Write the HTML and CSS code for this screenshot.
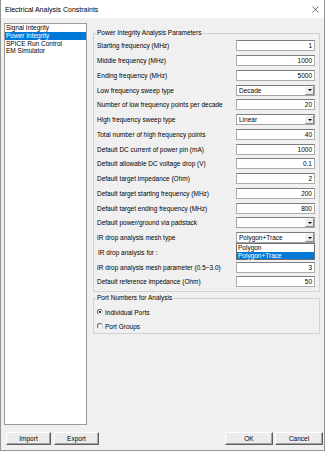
FILE: index.html
```html
<!DOCTYPE html>
<html>
<head>
<meta charset="utf-8">
<title>Electrical Analysis Constraints</title>
<link rel="stylesheet" href="styles.css">
</head>
<body>
<div class="window">
  <div class="titlebar">
    <span class="title">Electrical Analysis Constraints</span>
    <svg class="close" width="7" height="7" viewBox="0 0 7 7"><path d="M0.5 0.5L6.5 6.5M6.5 0.5L0.5 6.5" stroke="#333" stroke-width="0.7" fill="none"/></svg>
  </div>
  <div class="main">
    <ul class="list">
      <li>Signal Integrity</li>
      <li class="sel">Power Integrity</li>
      <li>SPICE Run Control</li>
      <li>EM Simulator</li>
    </ul>
    <div class="panel">
      <fieldset class="group params">
        <legend>Power Integrity Analysis Parameters</legend>
        <div class="row"><span class="lbl">Starting frequency (MHz)</span><span class="field">1</span></div>
        <div class="row"><span class="lbl">Middle frequency (MHz)</span><span class="field">1000</span></div>
        <div class="row"><span class="lbl">Ending frequency (MHz)</span><span class="field">5000</span></div>
        <div class="row"><span class="lbl">Low frequency sweep type</span><span class="combo"><span class="val">Decade</span><span class="arrow"></span></span></div>
        <div class="row"><span class="lbl">Number of low frequency points per decade</span><span class="field">20</span></div>
        <div class="row"><span class="lbl">High frequency sweep type</span><span class="combo"><span class="val">Linear</span><span class="arrow"></span></span></div>
        <div class="row"><span class="lbl">Total number of high frequency points</span><span class="field">40</span></div>
        <div class="row"><span class="lbl">Default DC current of power pin (mA)</span><span class="field">1000</span></div>
        <div class="row"><span class="lbl">Default allowable DC voltage drop (V)</span><span class="field">0.1</span></div>
        <div class="row"><span class="lbl">Default target impedance (Ohm)</span><span class="field">2</span></div>
        <div class="row"><span class="lbl">Default target starting frequency (MHz)</span><span class="field">200</span></div>
        <div class="row"><span class="lbl">Default target ending frequency (MHz)</span><span class="field">800</span></div>
        <div class="row"><span class="lbl">Default power/ground via padstack</span><span class="combo"><span class="val"></span><span class="arrow"></span></span></div>
        <div class="row"><span class="lbl">IR drop analysis mesh type</span>
          <span class="combo open"><span class="val">Polygon+Trace</span><span class="arrow"></span>
            <span class="droplist">
              <span class="opt">Polygon</span>
              <span class="opt sel">Polygon+Trace</span>
            </span>
          </span>
        </div>
        <div class="row"><span class="lbl indent">IR drop analysis for :</span></div>
        <div class="row"><span class="lbl">IR drop analysis mesh parameter (0.5~3.0)</span><span class="field">3</span></div>
        <div class="row"><span class="lbl">Default reference impedance (Ohm)</span><span class="field">50</span></div>
      </fieldset>
      <fieldset class="group ports">
        <legend>Port Numbers for Analysis</legend>
        <div class="radio-row"><span class="radio checked"></span><span>Individual Ports</span></div>
        <div class="radio-row"><span class="radio"></span><span>Port Groups</span></div>
      </fieldset>
    </div>
  </div>
  <div class="buttons">
    <div class="btn-group">
      <span class="btn">Import</span>
      <span class="btn">Export</span>
    </div>
    <div class="btn-group right">
      <span class="btn wide">OK</span>
      <span class="btn wide">Cancel</span>
    </div>
  </div>
</div>
</body>
</html>
```
FILE: styles.css
```css
* { box-sizing: border-box; }
html, body { margin: 0; padding: 0; }
body {
  width: 325px;
  height: 451px;
  overflow: hidden;
  background: #f0f0f0;
  font-family: "Liberation Sans", Arial, sans-serif;
  font-size: 6.5px;
  color: #111;
}
.window {
  width: 325px;
  height: 451px;
  border: 1px solid #8d998d;
  border-top: none;
  background: #f0f0f0;
  display: flex;
  flex-direction: column;
}
.titlebar {
  height: 18px;
  flex: none;
  background: #fff;
  display: flex;
  align-items: center;
  justify-content: space-between;
  padding: 0 5px 0 4px;
}
.title { font-size: 7px; color: #000; }
.close { display: block; }

.main {
  display: flex;
  gap: 6px;
  padding: 5px 4px 0 3px;
  height: 407px;
  flex: none;
}
.list {
  margin: 0;
  padding: 0;
  list-style: none;
  width: 83px;
  height: 402px;
  flex: none;
  background: #fff;
  border: 1px solid #9a9a9a;
}
.list li {
  height: 7.75px;
  line-height: 7.75px;
  padding-left: 1px;
  white-space: nowrap;
  color: #000;
}
.list li.sel { background: #0078d7; color: #fff; }

.panel {
  flex: 1;
  padding-top: 6px;
  display: flex;
  flex-direction: column;
}
.group {
  margin: 0;
  min-inline-size: 0;
  border: 1px solid #d2d2d2;
  padding: 1.6px 4px 2px 3px;
}
.group legend {
  padding: 0 1px;
  margin-left: -1px;
  line-height: 8px;
  font-size: 6.5px;
  color: #000;
}
.row {
  height: 14.75px;
  display: flex;
  align-items: center;
  justify-content: space-between;
}
.lbl { white-space: nowrap; color: #000; }
.lbl.indent { padding-left: 1px; }
.field {
  width: 79px;
  height: 11px;
  background: #fff;
  border: 1px solid #adadad;
  border-top-color: #7d7d7d;
  text-align: right;
  padding-right: 2px;
  line-height: 9px;
  color: #000;
}
.combo {
  position: relative;
  width: 79px;
  height: 11px;
  background: #fff;
  border: 1px solid #a5a5a5;
  border-top-color: #7d7d7d;
  display: flex;
  align-items: center;
  justify-content: space-between;
  padding-left: 2px;
  color: #000;
}
.arrow {
  width: 9px;
  height: 9px;
  border: 1px solid;
  border-color: #f4f4f4 #8a8a8a #8a8a8a #f4f4f4;
  background: #ececec;
  display: flex;
  align-items: center;
  justify-content: center;
}
.arrow::after {
  content: "";
  width: 0;
  height: 0;
  border-left: 2px solid transparent;
  border-right: 2px solid transparent;
  border-top: 2px solid #000;
}
.droplist {
  position: absolute;
  top: 10px;
  left: -1px;
  width: 79px;
  background: #fff;
  border: 1px solid #6e6e6e;
  display: flex;
  flex-direction: column;
  z-index: 2;
}
.opt {
  height: 7.5px;
  line-height: 7.5px;
  padding-left: 1px;
  color: #000;
}
.opt.sel { background: #0078d7; color: #fff; }

.ports {
  margin-top: 2px;
  padding: 3px 4px 0 3px;
}
.radio-row {
  height: 14px;
  display: flex;
  align-items: center;
  gap: 2px;
  color: #000;
}
.radio {
  width: 6px;
  height: 6px;
  border-radius: 50%;
  border: 1px solid;
  border-color: #6a6a6a #c8c8c8 #e8e8e8 #6a6a6a;
  background: #fff;
  display: flex;
  align-items: center;
  justify-content: center;
}
.radio.checked::after {
  content: "";
  width: 2px;
  height: 2px;
  border-radius: 50%;
  background: #000;
}

.buttons {
  margin-top: 7px;
  height: 13px;
  flex: none;
  display: flex;
  justify-content: space-between;
  padding: 0 1px 0 5px;
}
.btn-group { display: flex; gap: 3px; }
.btn-group.right { gap: 2px; }
.btn {
  width: 45px;
  height: 13px;
  display: flex;
  align-items: center;
  justify-content: center;
  background: #ececec;
  border: 1px solid;
  border-color: #fff #5f5f5f #5f5f5f #fff;
  box-shadow: inset -1px -1px 0 #a3a3a3;
  color: #000;
}
.btn.wide { width: 48px; }
```
